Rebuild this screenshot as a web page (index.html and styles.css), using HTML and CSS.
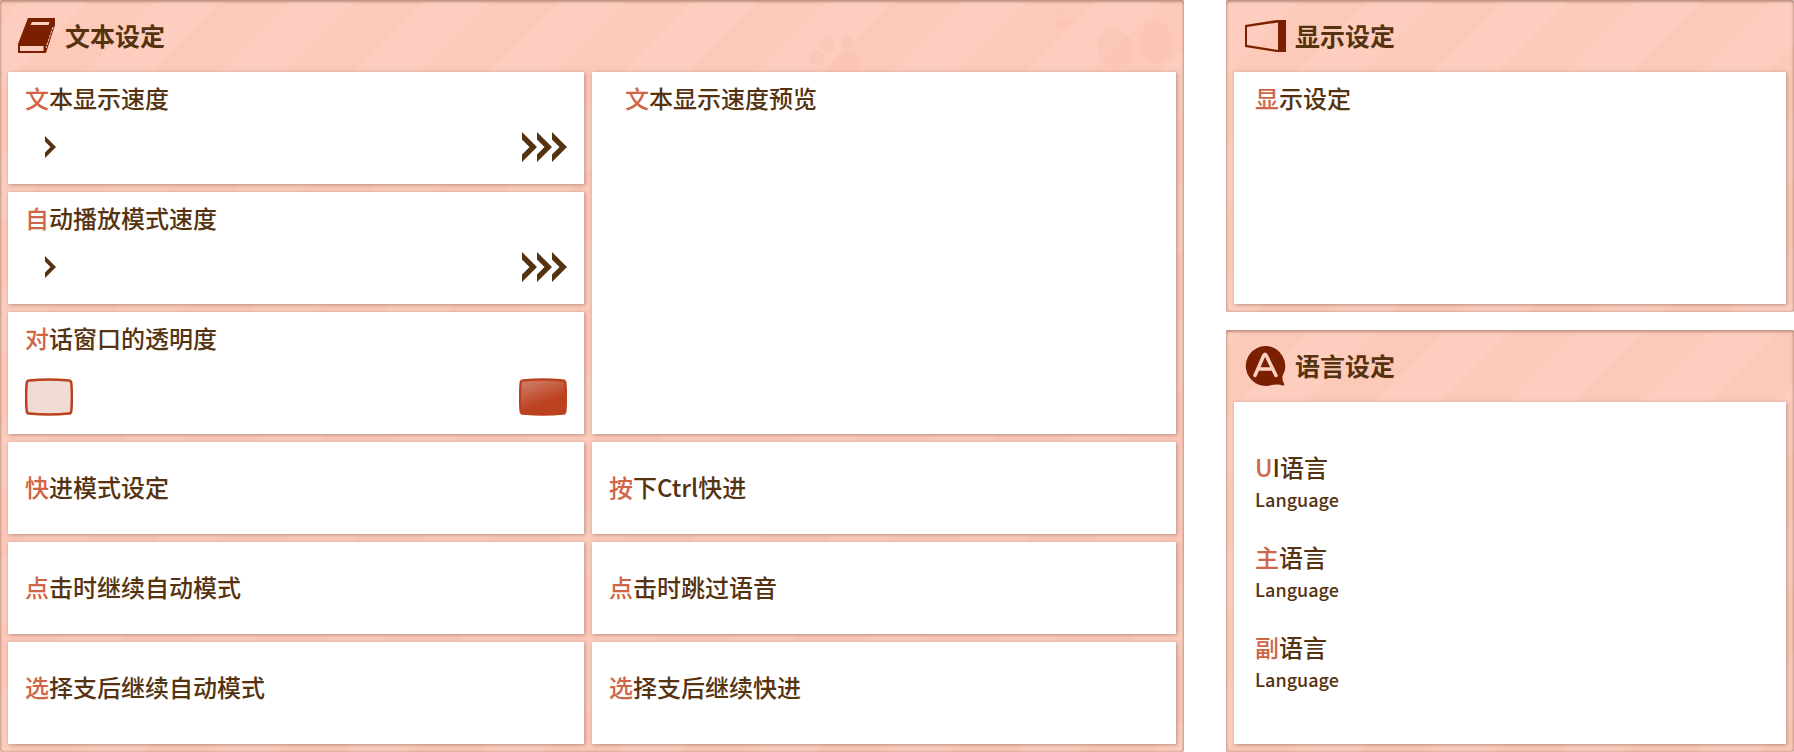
FILE: index.html
```
<!DOCTYPE html>
<html lang="zh-CN">
<head>
<meta charset="utf-8">
<title>设定</title>
<link rel="stylesheet" href="styles.css">
</head>
<body>
<svg class="defs" width="0" height="0" aria-hidden="true">
  <defs>
    <linearGradient id="solid" x1="0" y1="0" x2="0.5" y2="1">
      <stop offset="0" stop-color="#d28570"/>
      <stop offset="0.75" stop-color="#bb4120"/>
    </linearGradient>
    <symbol id="slow" viewBox="0 0 11 22"><path d="M0 0L11 11L0 22V16.500L5.500 11L0 5.500Z" fill="#553311"/></symbol>
    <symbol id="fast" viewBox="0 0 45 30"><path d="M0 0L15 15L0 30V22.500L7.500 15L0 7.500ZM15 0L30 15L15 30V22.500L22.500 15L15 7.500ZM30 0L45 15L30 30V22.500L37.500 15L30 7.500Z" fill="#553311"/></symbol>
  </defs>
</svg>
<main class="settings">
  <section class="panel stripes-text">
    <header class="panel-head">
      <svg class="paws" viewBox="0 0 384 72" aria-hidden="true"><g fill="#f7b39f" fill-opacity="0.220"><ellipse cx="27" cy="44" rx="7" ry="8" transform="rotate(-25 27 44)"/><ellipse cx="47" cy="42" rx="6" ry="7"/><ellipse cx="17" cy="58" rx="8" ry="7"/><path d="M31 72Q31 53 46 52Q60 54 59 72Z"/><circle cx="258" cy="15" r="2"/><circle cx="266" cy="16" r="2"/><circle cx="270" cy="23" r="2"/><ellipse cx="262" cy="24" rx="6" ry="5"/><ellipse cx="315" cy="48" rx="17" ry="20" transform="rotate(-15 315 48)"/><ellipse cx="356" cy="42" rx="16" ry="21"/></g></svg>
      <svg class="icon-book" viewBox="0 0 37 35" aria-hidden="true"><path fill="#7a2000" fill-rule="evenodd" d="M10 0H37V7L28 35H0V26ZM14 4L12.500 7H30.500L31.500 4ZM2 28V33H25.500V28Z"/><path d="M35 9L28 30" stroke="#fdd0c1" stroke-width="1" stroke-dasharray="3 1"/></svg>
      <h2>文本设定</h2>
    </header>
    <div class="text-grid">
      <div class="card slider-card"><h3>文本显示速度</h3><div class="range"><svg class="slow"><use href="#slow"/></svg><svg class="fast"><use href="#fast"/></svg></div></div>
      <div class="card preview"><h3>文本显示速度预览</h3></div>
      <div class="card slider-card"><h3>自动播放模式速度</h3><div class="range"><svg class="slow"><use href="#slow"/></svg><svg class="fast"><use href="#fast"/></svg></div></div>
      <div class="card slider-card"><h3>对话窗口的透明度</h3><div class="range windows">
        <svg class="window" viewBox="0 0 48 38"><path d="M4 2.500Q24 0.500 44 2.500Q46 2.500 46.300 5Q47.500 19 46.300 33Q46 35.500 44 35.500Q24 37.500 4 35.500Q2 35.500 1.700 33Q0.500 19 1.700 5Q2 2.500 4 2.500Z" fill="#f1dbd5" stroke="#bb4120" stroke-width="2.500"/></svg>
        <svg class="window" viewBox="0 0 48 38"><path d="M4 2.500Q24 0.500 44 2.500Q46 2.500 46.300 5Q47.500 19 46.300 33Q46 35.500 44 35.500Q24 37.500 4 35.500Q2 35.500 1.700 33Q0.500 19 1.700 5Q2 2.500 4 2.500Z" fill="url(#solid)" stroke="#bb4120" stroke-width="2.500"/></svg>
      </div></div>
      <div class="card row"><h3>快进模式设定</h3></div>
      <div class="card row"><h3>按下Ctrl快进</h3></div>
      <div class="card row"><h3>点击时继续自动模式</h3></div>
      <div class="card row"><h3>点击时跳过语音</h3></div>
      <div class="card row last"><h3>选择支后继续自动模式</h3></div>
      <div class="card row last"><h3>选择支后继续快进</h3></div>
    </div>
  </section>
  <div class="side">
    <section class="panel stripes-display">
      <header class="panel-head">
        <svg class="icon-side" viewBox="0 0 42 42" aria-hidden="true"><path fill="#7a2000" fill-rule="evenodd" d="M1 11L33 6H43V38H33L1 33ZM3 13V31L34 36V8.500Z"/></svg>
        <h2>显示设定</h2>
      </header>
      <div class="card display"><h3>显示设定</h3></div>
    </section>
    <section class="panel stripes-language grow">
      <header class="panel-head">
        <svg class="icon-side" viewBox="0 0 42 42" aria-hidden="true"><path fill="#7a2000" d="M21 2A20 20 0 1 0 28 41Q34 40 39 41.500Q41 41 40 39.500Q38 37 38.500 32A20 20 0 0 0 21 2Z"/><path d="M11 31.500L19.500 12Q21 8.500 22.500 12L32 31.500M15 25H28" fill="none" stroke="#fdd0c1" stroke-width="3.500" stroke-linecap="round" stroke-linejoin="round"/></svg>
        <h2>语言设定</h2>
      </header>
      <div class="card languages">
        <div><h3>UI语言</h3><p>Language</p></div>
        <div><h3>主语言</h3><p>Language</p></div>
        <div><h3>副语言</h3><p>Language</p></div>
      </div>
    </section>
  </div>
</main>
</body>
</html>
```
FILE: styles.css
```
* { box-sizing: border-box; }
body {
  margin: 0;
  background: #fff;
  color: #553311;
  font-family: "Noto Sans CJK SC", sans-serif;
}
h2, h3, p { margin: 0; }
svg { display: block; flex: none; }
.defs { position: absolute; }
.settings {
  display: grid;
  grid-template-columns: minmax(0, 1184fr) minmax(0, 568fr);
  gap: 42px;
  min-height: 100vh;
}
.panel {
  --light: #fdcebf;
  --dark: #fdcaba;
  display: flex;
  flex-direction: column;
  padding: 0 8px 8px;
  border-radius: 2px;
  box-shadow: inset 0 0 3px #78504080, inset 0 2px 3px #78504060;
}
.stripes-text { background: repeating-linear-gradient(135deg, var(--dark) 0 16px, var(--light) 16px 63px, var(--dark) 63px 95px); }
.stripes-display { background: repeating-linear-gradient(135deg, var(--dark) 0 6px, var(--light) 6px 53px, var(--dark) 53px 95px); }
.stripes-language { background: repeating-linear-gradient(135deg, var(--light) 0 12px, var(--dark) 12px 60px, var(--light) 60px 95px); }
.panel-head {
  position: relative;
  display: flex;
  align-items: center;
  gap: 10px;
  height: 72px;
  padding: 0 0 2px 10px;
}
.side .panel-head { gap: 9px; }
.paws { position: absolute; top: 0; right: -8px; width: 384px; height: 72px; }
h2 { font-size: 25px; line-height: 36px; font-weight: 700; }
h3 { font-size: 24px; line-height: 36px; font-weight: 500; }
h3::first-letter { color: #d06648; }
.icon-book { width: 37px; height: 35px; }
.icon-side { width: 42px; height: 42px; }
.card {
  background: #fff;
  box-shadow: 1px 1px 4px #78504080;
}
.text-grid {
  flex: 1;
  display: grid;
  grid-template-columns: minmax(0, 576fr) minmax(0, 584fr);
  grid-template-rows: 112px 112px 122px 92px 92px 1fr;
  gap: 8px;
}
.slider-card { padding: 8px 17px 0; }
.preview { grid-column: 2; grid-row: 1 / 4; padding: 8px 33px; }
.range {
  display: flex;
  justify-content: space-between;
  align-items: center;
  height: 62px;
  padding-left: 20px;
}
.windows { height: 82px; padding-left: 0; }
.slow { width: 11px; height: 22px; }
.fast { width: 45px; height: 30px; }
.window { width: 48px; height: 38px; }
.row { display: flex; align-items: center; padding: 0 17px 2px; }
.last { padding-bottom: 12px; }
.side { display: flex; flex-direction: column; gap: 18px; }
.grow { flex: 1; }
.display { height: 232px; padding: 8px 21px; }
.languages {
  flex: 1;
  display: flex;
  flex-direction: column;
  gap: 26px;
  padding: 47px 21px 0;
}
p { font-size: 18px; line-height: 28px; font-weight: 500; }
```
